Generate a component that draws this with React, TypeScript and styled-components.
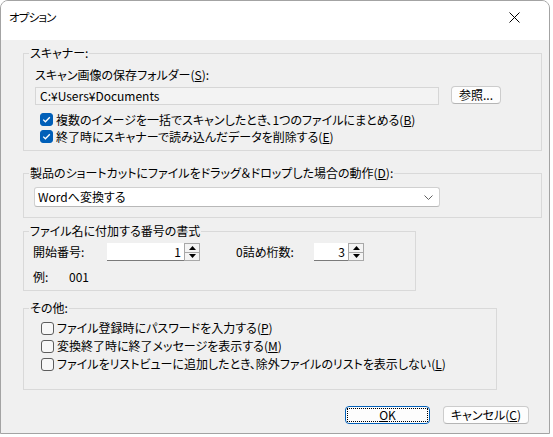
import React from "react";
import styled, { createGlobalStyle } from "styled-components";

const GlobalStyle = createGlobalStyle`
  html, body { margin: 0; padding: 0; background: #ffffff; }
  body {
    font-family: "Noto Sans CJK JP", "Noto Sans", sans-serif;
    font-size: 12px;
    color: #000;
    font-feature-settings: "palt";
  }
  * { box-sizing: border-box; }
`;

const Window = styled.div`
  width: 550px;
  height: 434px;
  border: 1px solid #a3a3a3;
  border-radius: 8px 8px 0 0;
  overflow: hidden;
  display: flex;
  flex-direction: column;
  background: #f0f0f0;
`;

const TitleBar = styled.div`
  height: 39px;
  flex: none;
  background: #ffffff;
  display: flex;
  align-items: flex-start;
  justify-content: space-between;
  padding: 8px 0 0 8px;
`;

const Title = styled.span`
  line-height: 16px;
  font-size: 11.5px;
  letter-spacing: -0.8px;
`;

const CloseBtn = styled.span`
  width: 46px;
  height: 16px;
  display: flex;
  align-items: center;
  justify-content: center;
  margin-right: 12px;
`;

const Body = styled.div`
  flex: 1;
  display: flex;
  flex-direction: column;
  padding-left: 22px;
`;

const Group = styled.fieldset<{ $w: number; $mt: number; $pt: number; $pb: number }>`
  width: ${(p) => p.$w}px;
  margin: ${(p) => p.$mt}px 0 0 0;
  padding: ${(p) => p.$pt}px 0 ${(p) => p.$pb}px 0;
  border: 1px solid #d9d9d9;
  min-width: 0;
`;

const Legend = styled.legend`
  line-height: 14px;
  padding: 0 1px;
  margin-left: 5px;
`;

const Content = styled.div<{ $pl: number }>`
  padding-left: ${(p) => p.$pl}px;
`;

const Label = styled.div`
  line-height: 16px;
  white-space: nowrap;
`;

const U = styled.span`
  text-decoration: underline;
  text-underline-offset: 1px;
`;

const PathRow = styled.div`
  display: flex;
  align-items: flex-start;
  gap: 12px;
  margin-top: 3px;
`;

const PathField = styled.div`
  width: 404px;
  height: 18px;
  margin-top: 1px;
  background: #f3f3f3;
  border: 1px solid #d6d6d6;
  padding-left: 4px;
  line-height: 16px;
  font-size: 12px;
`;

const PushButton = styled.div<{ $w: number; $focused?: boolean }>`
  width: ${(p) => p.$w}px;
  height: 18px;
  background: #fdfdfd;
  border: 1px solid ${(p) => (p.$focused ? "#005fb8" : "#cccccc")};
  border-bottom-color: ${(p) => (p.$focused ? "#005fb8" : "#b5b5b5")};
  border-radius: 4px;
  display: flex;
  align-items: center;
  justify-content: center;
  line-height: 14px;
  padding: 1px;
  white-space: nowrap;
`;

const FocusRect = styled.span`
  flex: 1;
  align-self: stretch;
  display: flex;
  align-items: center;
  justify-content: center;
  border: 1px dotted #000;
`;

const CheckList = styled.div<{ $mt: number; $rowH: number }>`
  display: flex;
  flex-direction: column;
  margin-top: ${(p) => p.$mt}px;
  padding-left: 5px;
  & > * {
    height: ${(p) => p.$rowH}px;
  }
`;

const CheckRow = styled.div`
  display: flex;
  align-items: center;
  gap: 3px;
  white-space: nowrap;
  line-height: 16px;
`;

const Box = styled.span<{ $checked?: boolean }>`
  width: 13px;
  height: 13px;
  flex: none;
  border-radius: 3px;
  border: 1px solid ${(p) => (p.$checked ? "#005fb8" : "#5d5d5d")};
  background: ${(p) => (p.$checked ? "#005fb8" : "#f7f7f7")};
  display: inline-flex;
  align-items: center;
  justify-content: center;
`;

const Combo = styled.div`
  width: 406px;
  height: 20px;
  background: #ffffff;
  border: 1px solid #d0d0d0;
  border-bottom-color: #b8b8b8;
  border-radius: 3px;
  display: flex;
  align-items: center;
  justify-content: space-between;
  padding: 0 6px 0 3px;
  line-height: 16px;
`;

const NumRow = styled.div`
  display: grid;
  grid-template-columns: 74px 93px 36px 78px 50px;
  align-items: center;
  height: 18px;
`;

const SpinWrap = styled.div`
  display: flex;
  height: 18px;
`;

const SpinField = styled.div<{ $w: number }>`
  width: ${(p) => p.$w}px;
  height: 18px;
  background: #ffffff;
  border-bottom: 1px solid #7a7a7a;
  text-align: right;
  padding-right: 3px;
  line-height: 17px;
`;

const SpinButtons = styled.div`
  width: 16px;
  height: 18px;
  display: flex;
  flex-direction: column;
  border: 1px solid #a8a8a8;
  background: #f4f4f4;
`;

const SpinBtn = styled.div`
  flex: 1;
  display: flex;
  align-items: center;
  justify-content: center;
  & + & {
    border-top: 1px solid #a8a8a8;
  }
`;

const ExampleRow = styled.div`
  display: flex;
  margin-top: 8px;
  line-height: 16px;
`;

const ExampleLabel = styled.span`
  width: 36px;
`;

const Buttons = styled.div`
  display: flex;
  justify-content: flex-end;
  gap: 13px;
  margin-top: 16px;
  padding-right: 20px;
`;

const Check = ({ checked }: { checked?: boolean }) => (
  <Box $checked={checked}>
    {checked && (
      <svg width="11" height="11" viewBox="0 0 11 11">
        <path d="M2.2 5.6 L4.4 7.8 L8.8 3.2" fill="none" stroke="#ffffff" strokeWidth="1.3" />
      </svg>
    )}
  </Box>
);

const Spinner = ({ value, w }: { value: string; w: number }) => (
  <SpinWrap>
    <SpinField $w={w}>{value}</SpinField>
    <SpinButtons>
      <SpinBtn>
        <svg width="7" height="4" viewBox="0 0 7 4">
          <path d="M0 4 L3.5 0 L7 4 Z" fill="#000" />
        </svg>
      </SpinBtn>
      <SpinBtn>
        <svg width="7" height="4" viewBox="0 0 7 4">
          <path d="M0 0 L3.5 4 L7 0 Z" fill="#000" />
        </svg>
      </SpinBtn>
    </SpinButtons>
  </SpinWrap>
);

export default function App() {
  return (
    <>
      <GlobalStyle />
      <Window>
        <TitleBar>
          <Title>オプション</Title>
          <CloseBtn>
            <svg width="11" height="11" viewBox="0 0 11 11">
              <path d="M0.5 0.5 L10.5 10.5 M10.5 0.5 L0.5 10.5" stroke="#000" strokeWidth="1" />
            </svg>
          </CloseBtn>
        </TitleBar>
        <Body>
          <Group $w={519} $mt={6} $pt={7} $pb={5}>
            <Legend>スキャナー:</Legend>
            <Content $pl={11}>
              <Label>
                スキャン画像の保存フォルダー(<U>S</U>):
              </Label>
              <PathRow>
                <PathField>C:¥Users¥Documents</PathField>
                <PushButton $w={50}>参照...</PushButton>
              </PathRow>
              <CheckList $mt={6} $rowH={17}>
                <CheckRow>
                  <Check checked />
                  <span>
                    複数のイメージを一括でスキャンしたとき、1つのファイルにまとめる(<U>B</U>)
                  </span>
                </CheckRow>
                <CheckRow>
                  <Check checked />
                  <span>
                    終了時にスキャナーで読み込んだデータを削除する(<U>E</U>)
                  </span>
                </CheckRow>
              </CheckList>
            </Content>
          </Group>

          <Group $w={519} $mt={15} $pt={7} $pb={10}>
            <Legend>
              製品のショートカットにファイルをドラッグ＆ドロップした場合の動作(<U>D</U>):
            </Legend>
            <Content $pl={10}>
              <Combo>
                <span>Wordへ変換する</span>
                <svg width="9" height="5" viewBox="0 0 9 5">
                  <path d="M0.5 0.5 L4.5 4.5 L8.5 0.5" fill="none" stroke="#606060" strokeWidth="1" />
                </svg>
              </Combo>
            </Content>
          </Group>

          <Group $w={393} $mt={6} $pt={5} $pb={5}>
            <Legend>ファイル名に付加する番号の書式</Legend>
            <Content $pl={9}>
              <NumRow>
                <Label>開始番号:</Label>
                <Spinner value="1" w={77} />
                <span />
                <Label>0詰め桁数:</Label>
                <Spinner value="3" w={34} />
              </NumRow>
              <ExampleRow>
                <ExampleLabel>例:</ExampleLabel>
                <span>001</span>
              </ExampleRow>
            </Content>
          </Group>

          <Group $w={474} $mt={10} $pt={4} $pb={16}>
            <Legend>その他:</Legend>
            <Content $pl={12}>
              <CheckList $mt={0} $rowH={18}>
                <CheckRow>
                  <Check />
                  <span>
                    ファイル登録時にパスワードを入力する(<U>P</U>)
                  </span>
                </CheckRow>
                <CheckRow>
                  <Check />
                  <span>
                    変換終了時に終了メッセージを表示する(<U>M</U>)
                  </span>
                </CheckRow>
                <CheckRow>
                  <Check />
                  <span>
                    ファイルをリストビューに追加したとき、除外ファイルのリストを表示しない(<U>L</U>)
                  </span>
                </CheckRow>
              </CheckList>
            </Content>
          </Group>

          <Buttons>
            <PushButton $w={85} $focused>
              <FocusRect>
                <U>O</U>K
              </FocusRect>
            </PushButton>
            <PushButton $w={86}>
              キャンセル(<U>C</U>)
            </PushButton>
          </Buttons>
        </Body>
      </Window>
    </>
  );
}
